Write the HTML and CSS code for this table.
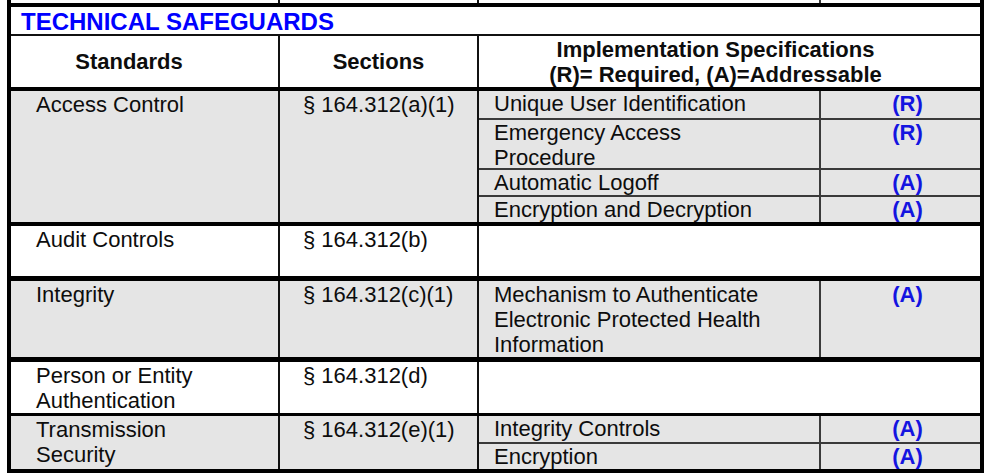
FILE: index.html
```html
<!DOCTYPE html>
<html>
<head>
<meta charset="utf-8">
<link rel="stylesheet" href="styles.css">
</head>
<body>
<div class="sheet">
  <div class="row prev">
    <div class="std"></div>
    <div class="sec"></div>
    <div class="impl"><div class="sub"><div class="spec"></div><div class="req"></div></div></div>
  </div>
  <div class="title">TECHNICAL SAFEGUARDS</div>
  <div class="row head">
    <div class="std">Standards</div>
    <div class="sec">Sections</div>
    <div class="impl">Implementation Specifications<br>(R)= Required, (A)=Addressable</div>
  </div>
  <div class="row gray r-access">
    <div class="std">Access Control</div>
    <div class="sec">§ 164.312(a)(1)</div>
    <div class="impl">
      <div class="sub h27"><div class="spec">Unique User Identification</div><div class="req">(R)</div></div>
      <div class="sub h48"><div class="spec">Emergency Access<br>Procedure</div><div class="req">(R)</div></div>
      <div class="sub h25"><div class="spec">Automatic Logoff</div><div class="req">(A)</div></div>
      <div class="sub h25"><div class="spec">Encryption and Decryption</div><div class="req">(A)</div></div>
    </div>
  </div>
  <div class="row r-audit">
    <div class="std">Audit Controls</div>
    <div class="sec">§ 164.312(b)</div>
    <div class="impl"></div>
  </div>
  <div class="row gray r-integrity">
    <div class="std">Integrity</div>
    <div class="sec">§ 164.312(c)(1)</div>
    <div class="impl">
      <div class="sub grow"><div class="spec">Mechanism to Authenticate<br>Electronic Protected Health<br>Information</div><div class="req">(A)</div></div>
    </div>
  </div>
  <div class="row r-person">
    <div class="std">Person or Entity<br>Authentication</div>
    <div class="sec">§ 164.312(d)</div>
    <div class="impl"></div>
  </div>
  <div class="row gray r-trans">
    <div class="std">Transmission<br>Security</div>
    <div class="sec">§ 164.312(e)(1)</div>
    <div class="impl">
      <div class="sub h26"><div class="spec">Integrity Controls</div><div class="req">(A)</div></div>
      <div class="sub h25"><div class="spec">Encryption</div><div class="req">(A)</div></div>
    </div>
  </div>
</div>
</body>
</html>
```

FILE: styles.css
```css
html, body {
  margin: 0;
  padding: 0;
  background: #ffffff;
}

body {
  font-family: "Liberation Sans", Arial, sans-serif;
  font-size: 22px;
  line-height: 25px;
  color: #0d0d0d;
}

.sheet {
  margin-left: 7px;
  width: 969px;
  border-left: 4px solid #000;
  border-right: 4px solid #000;
  border-bottom: 4px solid #000;
}

.row {
  display: flex;
}

.gray {
  background: #e5e5e5;
}

.std {
  width: 267px;
  flex: none;
  box-sizing: border-box;
  padding: 1px 0 0 25px;
}

.sec {
  width: 199px;
  flex: none;
  box-sizing: border-box;
  border-left: 2px solid #111;
  padding: 1px 0 0 23px;
}

.impl {
  width: 503px;
  flex: none;
  box-sizing: border-box;
  border-left: 2px solid #111;
  display: flex;
  flex-direction: column;
}

.sub {
  display: flex;
  flex: none;
}

.sub + .sub {
  border-top: 2px solid #3a3a3a;
}

.sub.grow {
  flex: 1;
}

.h25 { height: 25px; }
.h26 { height: 26px; }
.h27 { height: 27px; }
.h48 { height: 48px; }

.spec {
  width: 340px;
  flex: none;
  box-sizing: border-box;
  padding-left: 15px;
}

.req {
  width: 161px;
  flex: none;
  box-sizing: border-box;
  border-left: 2px solid #3a3a3a;
  padding-left: 14px;
  text-align: center;
  font-weight: bold;
  color: #1414e0;
}

.prev {
  height: 3px;
  overflow: hidden;
}

.prev .impl,
.prev .sub {
  height: 3px;
}

.title {
  height: 26px;
  padding-top: 1px;
  border-top: 4px solid #000;
  border-bottom: 2px solid #111;
  padding-left: 10px;
  font-size: 24px;
  line-height: 27px;
  font-weight: bold;
  color: #0000ff;
}

.head {
  height: 51px;
  font-weight: bold;
}

.head .std,
.head .sec,
.head .impl {
  display: flex;
  align-items: center;
  justify-content: center;
  text-align: center;
  padding: 0;
}

.head .std {
  padding-right: 31px;
}

.head .impl {
  flex-direction: column;
  padding: 1px 28px 0 0;
  justify-content: flex-start;
}

.r-access {
  height: 131px;
  border-top: 4px solid #000;
}

.r-audit {
  height: 50px;
  border-top: 4px solid #000;
}

.r-integrity {
  height: 76px;
  border-top: 5px solid #000;
}

.r-integrity .spec,
.r-integrity .req {
  padding-top: 1px;
}

.r-person {
  height: 51px;
  border-top: 5px solid #000;
}

.r-trans {
  height: 53px;
  border-top: 3px solid #000;
}
```
